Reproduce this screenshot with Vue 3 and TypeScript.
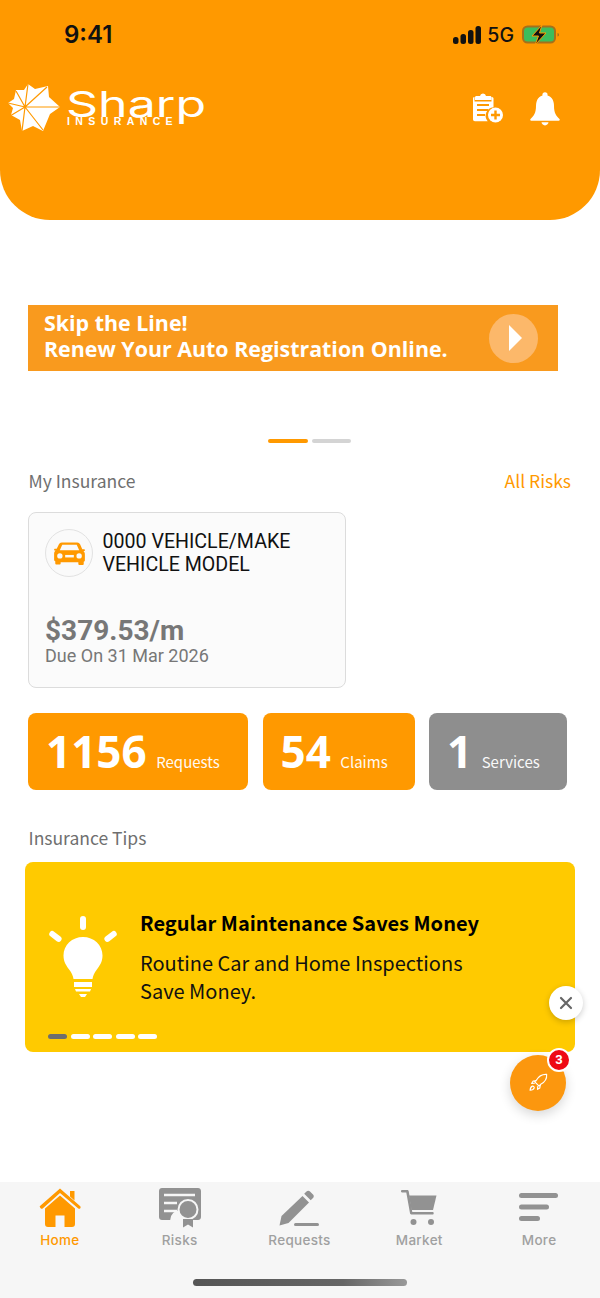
<script setup lang="ts">
interface Stat { value: string; label: string; grey?: boolean; width: number }
const stats: Stat[] = [
  { value: '1156', label: 'Requests', width: 220 },
  { value: '54', label: 'Claims', width: 152 },
  { value: '1', label: 'Services', width: 138, grey: true },
]
</script>

<template>
  <div class="page">
    <header class="hero">
      <div class="status">
        <span class="time">9:41</span>
        <div class="status-right">
          <svg class="signal" width="28" height="18" viewBox="0 0 28 18">
            <rect x="0" y="11" width="5.500" height="7" rx="2.500" />
            <rect x="7.500" y="8" width="5.500" height="10" rx="2.500" />
            <rect x="15" y="4" width="5.500" height="14" rx="2.500" />
            <rect x="22.500" y="0" width="5.500" height="18" rx="2.500" />
          </svg>
          <span class="net">5G</span>
          <svg class="battery" width="38" height="20" viewBox="0 0 38 20">
            <rect x="1" y="1.500" width="32" height="16" rx="4.500" fill="#3cbd5c" stroke="#a5701c" stroke-width="2" />
            <path d="M35.500 8v3.500c1 0 1.500-.8 1.500-1.700s-.5-1.800-1.500-1.800z" fill="#a5701c" />
            <path d="M20 0 10 11h6.500L13 20l11-12h-6.500z" fill="#111" stroke="#ff9900" stroke-width="1" />
          </svg>
        </div>
      </div>
      <div class="brand-row">
        <div class="brand">
          <svg class="star" width="54" height="50" viewBox="7 83 54 50">
            <path fill="#fff" d="M28 84 35 89 48 86 49 97 60 107 50 114 43 131 33 126 22 131 20 120 11 115 13 108 8 103 14 99 16 90 24 90z" />
            <path stroke="#ff9900" stroke-width="1.200" fill="none" d="M25 107 28 84M25 107 47 87M25 107H60M25 107 43 130M25 107 22 131M25 107 10 116M25 107 8 103M25 107 16 91" />
          </svg>
          <div class="wordmark">
            <span class="sharp">Sharp</span>
            <span class="ins">INSURANCE</span>
          </div>
        </div>
        <div class="hero-icons">
          <svg width="32" height="32" viewBox="0 0 32 32" fill="#fff">
            <path d="M11 1.500a3 3 0 0 1 3 2.500h4c1 0 1.500.7 1.500 1.500V8H3V5.500C3 4.700 3.500 4 4.500 4H8a3 3 0 0 1 3-2.500z" />
            <path d="M1 6.500c0-1 .5-1.500 1.500-1.500V9.500h17V5c1 0 2 .5 2 1.500v8.700a8.500 8.500 0 0 0-5.800 14H3c-1.200 0-2-.8-2-2z" />
            <path d="M5 13h12M5 18h11M5 23h8" stroke="#ff9900" stroke-width="2.200" />
            <circle cx="23.500" cy="23" r="7.500" />
            <path d="M23.500 18.500v9M19 23h9" stroke="#ff9900" stroke-width="2.400" />
          </svg>
          <svg class="bell" width="30" height="34" viewBox="0 0 30 32" preserveAspectRatio="none" fill="#fff">
            <circle cx="15" cy="2.800" r="2.600" />
            <path d="M15 3c6 0 9 4.300 9 10 0 6.500 2 9.500 5.500 12.500 .5.500 .3 1.500-.7 1.500H1.200c-1 0-1.200-1-.7-1.500C4 22.500 6 19.500 6 13c0-5.700 3-10 9-10z" />
            <path d="M11.500 28.500h7c0 1-1.500 3-3.500 3s-3.500-2-3.500-3z" />
          </svg>
        </div>
      </div>
    </header>

    <section class="banner">
      <div class="banner-text">
        <div>Skip the Line!</div>
        <div>Renew Your Auto Registration Online.</div>
      </div>
      <div class="play"><span class="tri"></span></div>
    </section>

    <div class="dots">
      <span class="dot on"></span>
      <span class="dot"></span>
    </div>

    <div class="sec-head first">
      <span>My Insurance</span>
      <span class="link">All Risks</span>
    </div>

    <article class="card">
      <div class="card-top">
        <div class="car-badge">
          <svg width="31" height="25" viewBox="0 0 32 26" fill="#ff9900">
            <path d="M8 1.500h16c1.500 0 2.500.8 3 2l2.300 5H31c.6 0 1 .5 1 1s-.4 1-1 1h-.5c1 1 1.500 2 1.500 3.500v6c0 .8-.5 1.300-1.200 1.500v2.500c0 .6-.4 1-1 1h-3.600c-.6 0-1-.4-1-1V22H6.800v1.500c0 .6-.4 1-1 1H2.200c-.6 0-1-.4-1-1V21C.5 20.800 0 20.300 0 19.500v-6C0 12 .5 11 1.500 10H1c-.6 0-1-.5-1-1s.4-1 1-1h1.700L5 3.500c.5-1.200 1.500-2 3-2z" />
            <path d="M8.500 3.800h15l2.600 5.700H5.900z" fill="#fafafa" />
            <circle cx="6" cy="15.500" r="2.800" fill="#fafafa" />
            <circle cx="26" cy="15.500" r="2.800" fill="#fafafa" />
            <rect x="11.500" y="14.500" width="9" height="2.600" fill="#fafafa" />
          </svg>
        </div>
        <div class="vehicle">0000 VEHICLE/MAKE<br />VEHICLE MODEL</div>
      </div>
      <div class="price">$379.53/m</div>
      <div class="due">Due On 31 Mar 2026</div>
    </article>

    <div class="stats">
      <div
        v-for="s in stats"
        :key="s.label"
        class="stat"
        :class="{ grey: s.grey }"
        :style="{ width: s.width + 'px' }"
      >
        <span class="num">{{ s.value }}</span>
        <span class="lab">{{ s.label }}</span>
      </div>
    </div>

    <div class="sec-head tips-head"><span>Insurance Tips</span></div>

    <section class="tip">
      <div class="tip-main">
        <svg class="bulb" width="70" height="84" viewBox="0 0 70 84" fill="#fff">
          <rect x="32" y="0" width="6" height="14" rx="3" />
          <rect x="32" y="0" width="6" height="14" rx="3" transform="rotate(-52 35 42)" />
          <rect x="32" y="0" width="6" height="14" rx="3" transform="rotate(52 35 42)" />
          <path d="M35 21c10.800 0 19.500 8 19.500 18.500 0 6.500-3 10.500-6 14.500-2 2.700-3.500 5.500-4 9H25.500c-.5-3.500-2-6.300-4-9-3-4-6-8-6-14.500C15.500 29 24.200 21 35 21z" />
          <rect x="26" y="66" width="18" height="5" />
          <path d="M27 73h16l-1 2.500H28z" />
          <path d="M31 78h8l-2 3h-4z" />
        </svg>
        <div class="tip-text">
          <div class="tip-title">Regular Maintenance Saves Money</div>
          <div class="tip-body">Routine Car and Home Inspections<br />Save Money.</div>
        </div>
      </div>
      <div class="tip-dots">
        <span class="tdot on"></span>
        <span class="tdot"></span>
        <span class="tdot"></span>
        <span class="tdot"></span>
        <span class="tdot"></span>
      </div>
    </section>

    <button class="close" aria-label="Close">
      <svg width="14" height="14" viewBox="0 0 14 14"><path d="M2 2l10 10M12 2 2 12" stroke="#666" stroke-width="2.200" stroke-linecap="round" /></svg>
    </button>
    <button class="fab" aria-label="Launch">
      <svg width="20" height="20" viewBox="0 0 22 22" fill="none" stroke="#fff" stroke-width="1.300" stroke-linejoin="round" stroke-linecap="round">
        <path d="M20.500 1.500c-5-.3-9 2.300-11.500 6.700l-1.800 1.300 5 5 1.400-1.800C18 10.500 21 6.500 20.500 1.500z" />
        <path d="M8.500 8.500 5.500 9l-1.500 2.500 3-.2M13.500 13.500l-.5 3-2.500 1.500.2-3" />
        <path d="M5 14.500c-1.500.5-2.500 2-2.700 4.500 2.500-.2 4-1.200 4.500-2.700.3-1-.8-2.100-1.800-1.800z" />
      </svg>
      <span class="badge">3</span>
    </button>

    <nav class="tabbar">
      <div class="tabs">
        <div class="tab active">
          <svg width="42" height="40" viewBox="0 0 42 40" fill="#ff9900">
            <path d="M31 3h4.500v9.500L31 8.500z" />
            <path d="M21 0.500 41 18c.8.800.8 1.500.3 2.200s-1.300.8-2 .2L21 5 3.700 20.400c-.7.600-1.500.6-2-.2S.2 18.800 1 18z" />
            <path d="M21 7.500 36 20.500v15.500c0 1.700-1 3-3 3h-7.500V27.500h-9V39H9c-2 0-3-1.300-3-3V20.500z" />
          </svg>
          <span>Home</span>
        </div>
        <div class="tab">
          <svg width="42" height="40" viewBox="0 0 42 40">
            <path d="M3 0h36c1.700 0 3 1.300 3 3v26c0 1.700-1.300 3-3 3h-7.800a10 10 0 0 0-20 0H3c-1.700 0-3-1.300-3-3V3c0-1.700 1.300-3 3-3z" fill="#929292" />
            <path d="M5 7h31M5 15h13M5 23h13" stroke="#f6f6f6" stroke-width="2.600" />
            <circle cx="29" cy="21.500" r="9.500" fill="#929292" stroke="#f6f6f6" stroke-width="2" />
            <path d="M24 31h10v8.500l-5-3-5 3z" fill="#929292" />
          </svg>
          <span>Risks</span>
        </div>
        <div class="tab">
          <svg width="42" height="40" viewBox="0 0 42 40" fill="#929292">
            <path d="M28.500 3.500c1-1 2.500-1 3.500 0l3 3c1 1 1 2.500 0 3.500l-2.300 2.300-6.500-6.500z" />
            <path d="M24.500 8 31 14.500 10.500 35 1.500 37.500 3.500 28z" />
            <rect x="16" y="35" width="25" height="3" rx="1.500" />
          </svg>
          <span>Requests</span>
        </div>
        <div class="tab">
          <svg width="42" height="40" viewBox="0 0 42 40" fill="#929292">
            <path d="M4 2h5c1 0 1.500.5 1.700 1.300L14.300 24h20.200c.8 0 1.200.5 1.200 1.200s-.4 1.300-1.200 1.300H13.300c-.7 0-1.200-.5-1.300-1.200L8.300 4.500H4c-.7 0-1-.5-1-1.200S3.300 2 4 2z" />
            <path d="M11 7.500h27.500L35 22H13.500z" />
            <circle cx="15.500" cy="34" r="3" />
            <circle cx="33" cy="34" r="3" />
          </svg>
          <span>Market</span>
        </div>
        <div class="tab">
          <svg width="42" height="40" viewBox="0 0 42 40" fill="#929292">
            <rect x="1" y="5" width="39" height="5" rx="2.500" />
            <rect x="1" y="16.500" width="30" height="5" rx="2.500" />
            <rect x="1" y="28" width="21" height="5" rx="2.500" />
          </svg>
          <span>More</span>
        </div>
      </div>
      <div class="indicator"></div>
    </nav>
  </div>
</template>

<style>
html, body { margin: 0; background: #fff; }
</style>

<style scoped>
.page {
  position: relative;
  width: 600px;
  height: 1298px;
  overflow: hidden;
  display: flex;
  flex-direction: column;
  background: #fff;
  font-family: "Noto Sans CJK SC", "Noto Sans", sans-serif;
}
.hero {
  height: 220px;
  flex: none;
  background: #ff9900;
  border-radius: 0 0 50px 50px;
  display: flex;
  flex-direction: column;
}
.status {
  display: flex;
  justify-content: space-between;
  align-items: center;
  padding: 21px 40px 0 64px;
  height: 28px;
}
.time {
  font: 600 24px/28px Inter, "Liberation Sans", sans-serif;
  color: #111;
}
.status-right { display: flex; align-items: center; gap: 6px; }
.signal { fill: #111; }
.net { font: 500 19.500px/28px Inter, "Liberation Sans", sans-serif; color: #111; margin-right: 2px; }
.brand-row {
  display: flex;
  justify-content: space-between;
  align-items: center;
  margin-top: 34px;
  padding: 0 39px 0 7px;
  height: 50px;
}
.brand { display: flex; align-items: center; gap: 5px; }
.star { display: block; }
.wordmark {
  position: relative;
  width: 140px;
  height: 36px;
  color: #fff;
}
.sharp {
  position: absolute;
  left: 0;
  top: 2px;
  font: 400 36px/24px Inter, "Liberation Sans", sans-serif;
  transform: scaleX(1.39);
  transform-origin: left center;
}
.ins {
  position: absolute;
  left: 1px;
  top: 26px;
  font: 700 10.500px/11px "Liberation Sans", sans-serif;
  letter-spacing: 5.400px;
}
.hero-icons { display: flex; align-items: center; gap: 26px; }
.bell { margin: 2px 1px 0 0; }
.banner {
  flex: none;
  margin: 85px 0 0 28px;
  width: 530px;
  height: 66px;
  background: #f99a1e;
  display: flex;
  align-items: center;
  justify-content: space-between;
  padding: 0 20px 0 16px;
  box-sizing: border-box;
}
.banner-text {
  color: #fff;
  font: 700 21.400px/26px "Open Sans", sans-serif;
  padding-bottom: 5px;
}
.play {
  width: 49px;
  height: 49px;
  border-radius: 50%;
  background: #fcb86a;
  display: flex;
  align-items: center;
  justify-content: center;
}
.tri {
  display: block;
  width: 0;
  height: 0;
  margin-left: 4px;
  border-left: 13px solid #fff;
  border-top: 13px solid transparent;
  border-bottom: 13px solid transparent;
}
.dots {
  flex: none;
  display: flex;
  gap: 4px;
  margin: 68px 0 0 268px;
}
.dot { width: 39px; height: 4px; border-radius: 2px; background: #d4d4d4; }
.dot.on { width: 40px; background: #ff9900; }
.sec-head {
  flex: none;
  display: flex;
  justify-content: space-between;
  padding: 0 29px 0 28.500px;
  color: #6f6f6f;
  font-size: 17.500px;
  line-height: 26px;
}
.sec-head.first { margin-top: 25px; }
.link { color: #ff9900; }
.card {
  flex: none;
  margin: 18px 0 0 28px;
  width: 318px;
  height: 176px;
  box-sizing: border-box;
  border: 1.500px solid #dcdcdc;
  border-radius: 8px;
  background: #fbfbfb;
  padding: 16px 16px;
  font-family: Roboto, sans-serif;
}
.card-top { display: flex; gap: 9.500px; align-items: center; }
.car-badge {
  width: 48px;
  height: 48px;
  border: 1.500px solid #e2e2e2;
  border-radius: 50%;
  box-sizing: border-box;
  background: #fafafa;
  display: flex;
  align-items: center;
  justify-content: center;
}
.vehicle { font-size: 19.600px; line-height: 23px; color: #111; }
.price {
  margin-top: 38px;
  font-size: 28px;
  line-height: 32px;
  font-weight: 700;
  color: #777;
}
.due { font-size: 18px; line-height: 18px; color: #777; }
.stats {
  flex: none;
  display: flex;
  gap: 14.500px;
  margin: 25px 0 0 28px;
}
.stat {
  height: 77px;
  box-sizing: border-box;
  border-radius: 8px;
  background: #ff9900;
  color: #fff;
  padding-left: 18px;
  display: flex;
  align-items: center;
  gap: 9.500px;
}
.stat.grey { background: #8e8e8e; }
.num { font-size: 44px; line-height: 77px; font-weight: 700; font-family: "Noto Sans", sans-serif; }
.lab { font-size: 15px; line-height: 20px; margin-top: 20px; opacity: .95; }
.tips-head { margin-top: 35px; }
.tip {
  flex: none;
  margin: 11px 0 0 25px;
  width: 550px;
  height: 190px;
  box-sizing: border-box;
  border-radius: 8px;
  background: #ffca00;
  padding: 47px 0 0 22.500px;
  position: relative;
}
.tip-main { display: flex; gap: 22.500px; align-items: flex-start; }
.bulb { margin-top: 7px; }
.tip-title { font-size: 20px; line-height: 28px; font-weight: 700; color: #000; }
.tip-body { margin-top: 12px; font-size: 20px; line-height: 28px; color: #111; }
.tip-dots {
  position: absolute;
  left: 23px;
  bottom: 13px;
  display: flex;
  gap: 3.500px;
}
.tdot { width: 19px; height: 5px; border-radius: 3px; background: #fff; }
.tdot.on { background: #6e6e6e; }
.close {
  position: absolute;
  left: 549px;
  top: 986px;
  width: 34px;
  height: 34px;
  padding: 0;
  border: none;
  border-radius: 50%;
  background: #fff;
  box-shadow: 0 2px 6px rgba(0, 0, 0, .2);
  display: flex;
  align-items: center;
  justify-content: center;
}
.fab {
  position: absolute;
  left: 510px;
  top: 1055px;
  width: 56px;
  height: 56px;
  padding: 0;
  border: none;
  border-radius: 50%;
  background: #fc970e;
  box-shadow: 0 4px 12px rgba(0, 0, 0, .16);
  display: flex;
  align-items: center;
  justify-content: center;
}
.badge {
  position: absolute;
  right: -5px;
  top: -7px;
  width: 20px;
  height: 20px;
  border: 2.500px solid #fff;
  border-radius: 50%;
  background: #ee0a14;
  color: #fff;
  font: 700 13px/20px Roboto, sans-serif;
  text-align: center;
}
.tabbar {
  margin-top: auto;
  flex: none;
  height: 116px;
  background: #f6f6f6;
  position: relative;
}
.tabs {
  display: grid;
  grid-template-columns: repeat(5, 1fr);
  padding: 6px 1px 0 0;
}
.tab {
  display: flex;
  flex-direction: column;
  align-items: center;
  gap: 3px;
  color: #a0a0a0;
  font: 500 13.500px/18px Inter, Roboto, sans-serif;
  letter-spacing: .3px;
}
.tab.active { color: #ff9900; }
.indicator {
  position: absolute;
  left: 193px;
  top: 97px;
  width: 214px;
  height: 7px;
  border-radius: 4px;
  background: linear-gradient(90deg, #555, #666 70%, #999);
}
</style>
